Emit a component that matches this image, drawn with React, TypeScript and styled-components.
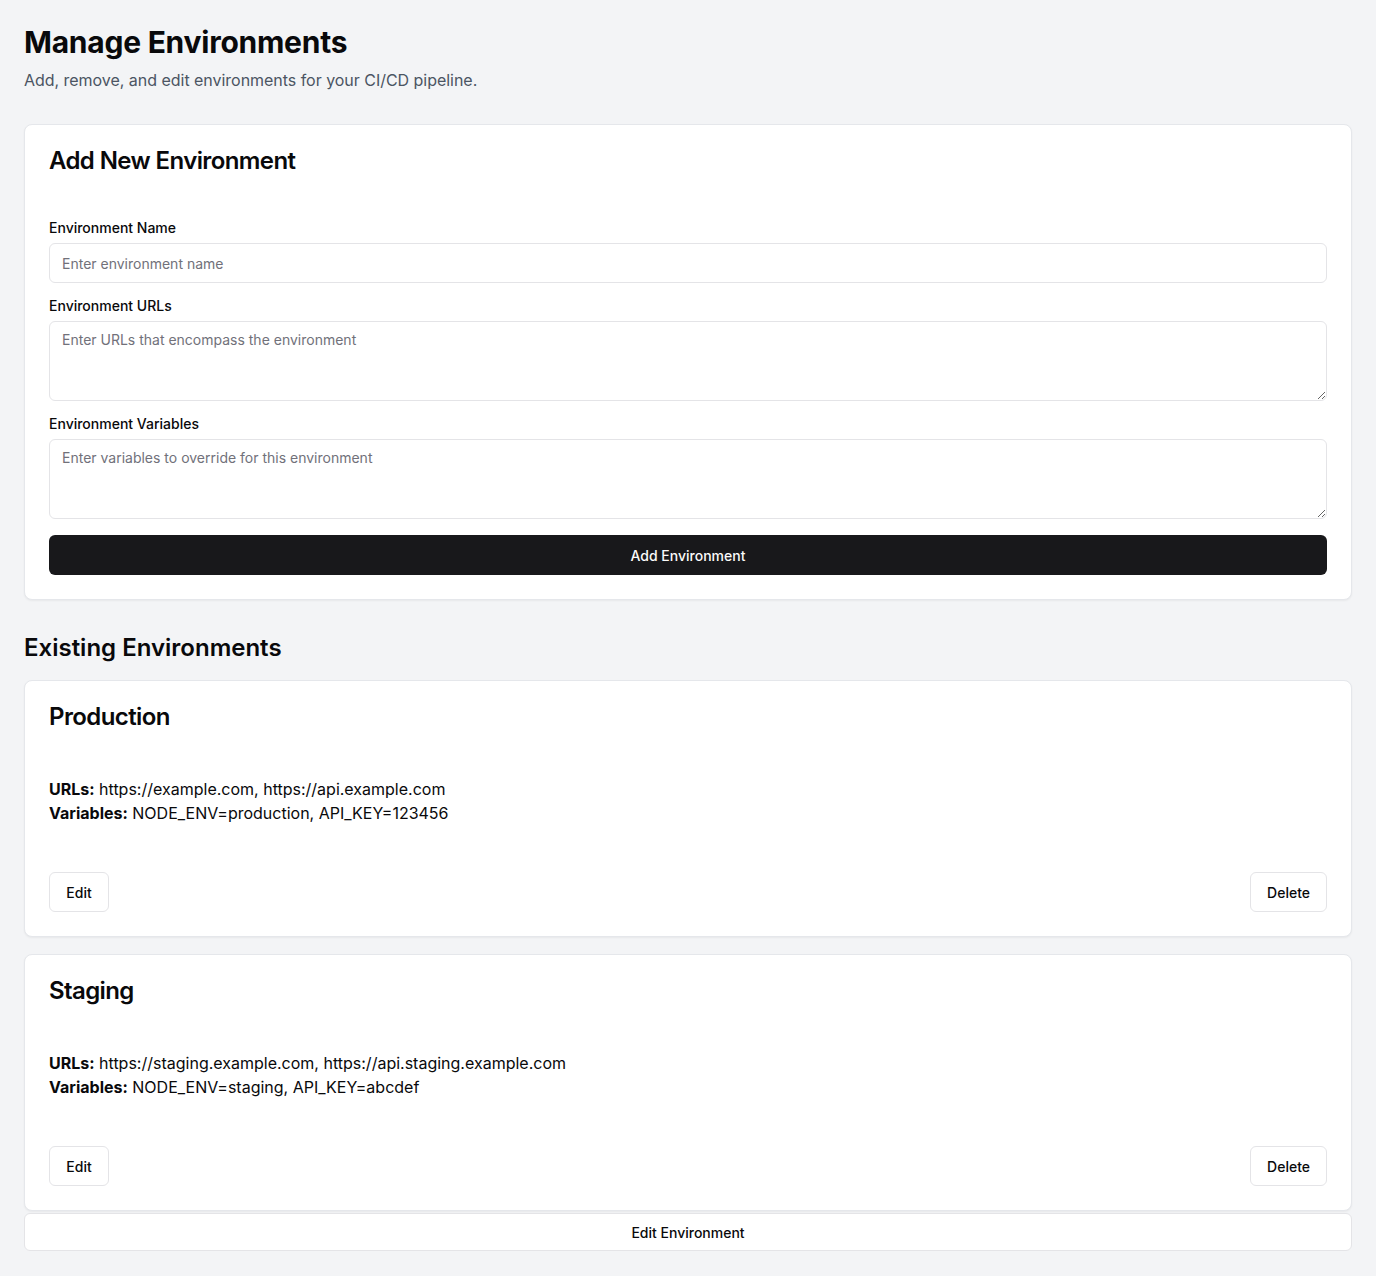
import React from "react";
import styled, { createGlobalStyle } from "styled-components";

const Global = createGlobalStyle`
  * { box-sizing: border-box; }
  html, body { margin: 0; padding: 0; }
  body {
    background: #f3f4f6;
    font-family: Inter, "Noto Sans", Arial, sans-serif;
    color: #09090b;
  }
`;

const Page = styled.main`
  padding: 24px;
  display: flex;
  flex-direction: column;
`;

const Title = styled.h1`
  margin: 0;
  font-size: 30px;
  line-height: 36px;
  font-weight: 700;
  letter-spacing: -0.25px;
`;

const Subtitle = styled.p`
  margin: 8px 0 0;
  font-size: 16px;
  line-height: 24px;
  color: #4b5563;
  letter-spacing: -0.03px;
`;

const Card = styled.section<{ $mt?: number }>`
  margin-top: ${(p) => p.$mt ?? 0}px;
  background: #ffffff;
  border: 1px solid #e5e7eb;
  border-radius: 8px;
  box-shadow: 0 1px 2px rgba(0, 0, 0, 0.05);
`;

const CardHeader = styled.div`
  padding: 24px 24px 0;
`;

const CardTitle = styled.h3`
  margin: 0;
  font-size: 24px;
  line-height: 24px;
  font-weight: 600;
  letter-spacing: -0.6px;
`;

const Form = styled.form`
  padding: 45px 24px 24px;
  display: flex;
  flex-direction: column;
`;

const Field = styled.div<{ $mt: number }>`
  display: flex;
  flex-direction: column;
  gap: 5px;
  margin-top: ${(p) => p.$mt}px;
`;

const Label = styled.label`
  font-size: 14px;
  line-height: 20px;
  font-weight: 500;
  color: #09090b;
`;

const controlBase = `
  width: 100%;
  border: 1px solid #e4e4e7;
  border-radius: 6px;
  background: #ffffff;
  padding: 8px 12px;
  font-family: Inter, "Noto Sans", Arial, sans-serif;
  font-size: 14px;
  line-height: 20px;
  color: #09090b;
  outline: none;
  &::placeholder { color: #71717a; }
`;

const Input = styled.input`
  ${controlBase}
  height: 40px;
`;

const TextArea = styled.textarea`
  ${controlBase}
  height: 80px;
  resize: vertical;
  display: block;
`;

const PrimaryButton = styled.button`
  margin-top: 16px;
  height: 40px;
  width: 100%;
  border: none;
  border-radius: 6px;
  background: #18181b;
  color: #fafafa;
  font-family: Inter, "Noto Sans", Arial, sans-serif;
  font-size: 14px;
  font-weight: 500;
  cursor: pointer;
`;

const SectionTitle = styled.h2`
  margin: 32px 0 16px;
  font-size: 24px;
  line-height: 32px;
  font-weight: 600;
  letter-spacing: 0;
`;

const CardContent = styled.div`
  padding: 48px 24px 0;
  font-size: 16px;
  line-height: 24px;
`;

const Line = styled.p`
  margin: 0;
`;

const CardFooter = styled.div`
  padding: 47px 24px 24px;
  display: flex;
  justify-content: space-between;
  align-items: center;
`;

const OutlineButton = styled.button<{ $full?: boolean }>`
  height: ${(p) => (p.$full ? 38 : 40)}px;
  padding: 0 16px;
  min-width: ${(p) => (p.$full ? "0" : "60px")};
  width: ${(p) => (p.$full ? "100%" : "auto")};
  margin-top: ${(p) => (p.$full ? 2 : 0)}px;
  background: #ffffff;
  border: 1px solid #e4e4e7;
  border-radius: 6px;
  color: #09090b;
  font-family: Inter, "Noto Sans", Arial, sans-serif;
  font-size: 14px;
  font-weight: 500;
  cursor: pointer;
`;

type Env = { name: string; urls: string; vars: string };

const envs: Env[] = [
  {
    name: "Production",
    urls: "https://example.com, https://api.example.com",
    vars: "NODE_ENV=production, API_KEY=123456",
  },
  {
    name: "Staging",
    urls: "https://staging.example.com, https://api.staging.example.com",
    vars: "NODE_ENV=staging, API_KEY=abcdef",
  },
];

export default function App() {
  return (
    <>
      <Global />
      <Page>
        <Title>Manage Environments</Title>
        <Subtitle>Add, remove, and edit environments for your CI/CD pipeline.</Subtitle>

        <Card $mt={32}>
          <CardHeader>
            <CardTitle>Add New Environment</CardTitle>
          </CardHeader>
          <Form onSubmit={(e) => e.preventDefault()}>
            <Field $mt={0}>
              <Label>Environment Name</Label>
              <Input placeholder="Enter environment name" />
            </Field>
            <Field $mt={13}>
              <Label>Environment URLs</Label>
              <TextArea placeholder="Enter URLs that encompass the environment" />
            </Field>
            <Field $mt={13}>
              <Label>Environment Variables</Label>
              <TextArea placeholder="Enter variables to override for this environment" />
            </Field>
            <PrimaryButton type="submit">Add Environment</PrimaryButton>
          </Form>
        </Card>

        <SectionTitle>Existing Environments</SectionTitle>

        {envs.map((env, i) => (
          <Card key={env.name} $mt={i === 0 ? 0 : 17}>
            <CardHeader>
              <CardTitle>{env.name}</CardTitle>
            </CardHeader>
            <CardContent>
              <Line>
                <strong>URLs:</strong> {env.urls}
              </Line>
              <Line>
                <strong>Variables:</strong> {env.vars}
              </Line>
            </CardContent>
            <CardFooter>
              <OutlineButton>Edit</OutlineButton>
              <OutlineButton>Delete</OutlineButton>
            </CardFooter>
          </Card>
        ))}
        <OutlineButton $full>Edit Environment</OutlineButton>
      </Page>
    </>
  );
}
